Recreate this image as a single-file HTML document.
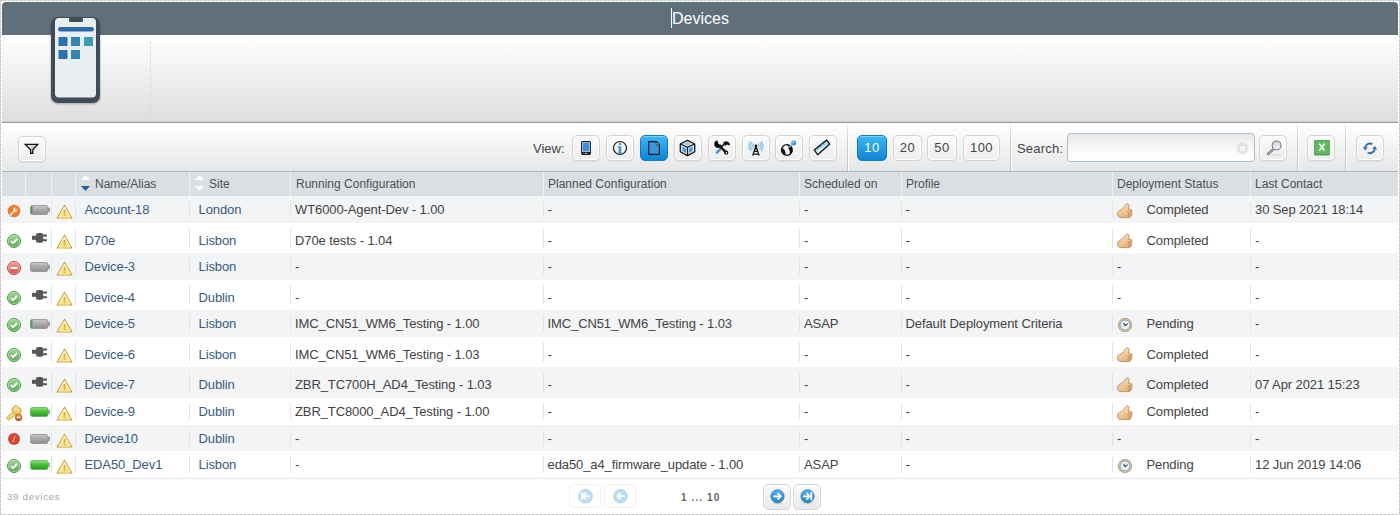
<!DOCTYPE html>
<html><head><meta charset="utf-8">
<style>
*{margin:0;padding:0;box-sizing:border-box}
html,body{width:1400px;height:515px;overflow:hidden;background:#fff;font-family:"Liberation Sans",sans-serif}
.abs{position:absolute}
.row svg,.abs>svg{display:block}
.fr{position:absolute}
#ft{left:0;top:0;width:1400px;height:1px;background:repeating-linear-gradient(90deg,#c4c4c4 0 2px,#dedede 2px 4px)}
#fb{left:0;top:514px;width:1400px;height:1px;background:repeating-linear-gradient(90deg,#c4c4c4 0 2px,#dedede 2px 4px)}
#fl{left:0;top:0;width:1px;height:515px;background:repeating-linear-gradient(180deg,#c4c4c4 0 2px,#dedede 2px 4px)}
#fr{left:1399px;top:0;width:1px;height:515px;background:repeating-linear-gradient(180deg,#c4c4c4 0 2px,#dedede 2px 4px)}
#hdr{position:absolute;left:2px;top:2px;width:1396px;height:33px;background:#5f707b;border-radius:4px 4px 0 0}
#title{position:absolute;left:672px;top:10px;color:#fff;font-size:16px;line-height:17px}
#caret{position:absolute;left:671px;top:8px;width:1px;height:20px;background:#fff}
#banner{position:absolute;left:2px;top:35px;width:1396px;height:87px;background:linear-gradient(#fff,#dedede)}
#bline{position:absolute;left:2px;top:121px;width:1396px;height:2px;background:linear-gradient(#cfcfcf 0 50%,#9a9a9a 50% 100%)}
#dots{position:absolute;left:150px;top:42px;width:0;height:74px;border-left:1px dotted #d2d2d2}
#toolbar{position:absolute;left:2px;top:123px;width:1396px;height:48px;background:linear-gradient(#fff 0%,#f6f6f6 40%,#e6e6e6 100%)}
#tline{position:absolute;left:2px;top:171px;width:1396px;height:1px;background:#b4b4b4}
.btn{position:absolute;width:28px;height:26px;border:1px solid #d3d3d3;border-radius:5px;background:linear-gradient(#fbfbfb,#ededed);box-shadow:inset 0 0 0 1px #fff,0 1px 1px rgba(0,0,0,0.06)}
.btn svg{position:absolute;left:0;top:0}
.btn.on{background:linear-gradient(#3cb8f4,#0e84d6);border-color:#1479bd;box-shadow:inset 0 1px 0 rgba(255,255,255,0.35)}
.sep{position:absolute;top:123px;width:1px;height:48px;background:linear-gradient(#f2f2f2,#d0d0d0 30%,#c4c4c4);box-shadow:1px 0 0 #fff}
.tt{position:absolute;font-size:13px;color:#444;line-height:13px}
.pg{position:absolute;top:135px;height:26px;border:1px solid #d3d3d3;border-radius:5px;background:linear-gradient(#fbfbfb,#ededed);box-shadow:inset 0 0 0 1px #fff;letter-spacing:0.4px;font-size:13px;color:#444;text-align:center;line-height:24px}
.pg.on{background:linear-gradient(#3cb8f4,#0e84d6);border-color:#1479bd;color:#fff;box-shadow:inset 0 1px 0 rgba(255,255,255,0.35)}
#search{position:absolute;left:1067px;top:133px;width:188px;height:29px;border:1px solid #a8bfd0;border-radius:4px;background:linear-gradient(#e9e9e9,#fafafa 60%,#fff)}
#thead{position:absolute;left:2px;top:172px;width:1396px;height:24px;background:#d9dfe3}
.th{position:absolute;top:172px;height:24px;font-size:12px;color:#505050;line-height:24px;white-space:nowrap}
.hs{position:absolute;top:172px;width:1px;height:24px;background:#eef1f3}
.row{position:absolute;left:2px;width:1396px}
.row.g{background:#f3f4f6}
.c{position:absolute;font-size:13px;color:#424242;white-space:nowrap;letter-spacing:-0.1px}
.lk{color:#375b80}
.vs{position:absolute;width:1px;background:#e3e6e9}
.pgb{position:absolute;top:484px;width:28px;height:26px;border:1px solid #d8d8d8;border-radius:5px;background:linear-gradient(#fafafa,#e9e9e9)}
.pgb.dis{width:32px;height:24px;border-color:#f0f0f0;background:#fff}
#botline{position:absolute;left:2px;top:478px;width:1396px;height:1px;background:#e8eaec}
</style></head><body>
<div id="ft" class="fr"></div><div id="fb" class="fr"></div><div id="fl" class="fr"></div><div id="fr" class="fr"></div>
<div id="hdr"></div>
<div id="title">Devices</div>
<div id="caret"></div>
<div id="banner"></div>
<div id="dots"></div>
<div id="bline"></div>
<!-- phone icon -->
<svg class="abs" style="left:48px;top:14px" width="56" height="92" viewBox="0 0 56 92">
  <defs>
    <linearGradient id="sq" x1="0" y1="0" x2="1" y2="0"><stop offset="0" stop-color="#2a72b0"/><stop offset="1" stop-color="#3a9bb3"/></linearGradient>
    <filter id="sh" x="-20%" y="-10%" width="140%" height="130%"><feDropShadow dx="0" dy="1" stdDeviation="1" flood-opacity="0.3"/></filter>
  </defs>
  <rect x="3" y="3" width="49" height="86" rx="7" fill="#414d58" filter="url(#sh)"/>
  <rect x="7" y="4" width="41" height="79.5" rx="4" fill="#e9eef2"/>
  <rect x="21" y="3" width="14" height="5" rx="1.5" fill="#414d58"/>
  <rect x="10" y="13" width="36" height="4.5" rx="2.2" fill="#2c6aa8"/>
  <rect x="10.5" y="23" width="9" height="9" fill="#2b72b0"/>
  <rect x="23" y="23" width="9" height="9" fill="#3185b4"/>
  <rect x="36" y="23" width="9" height="9" fill="#3a9db3"/>
  <rect x="10.5" y="36" width="9" height="9" fill="#2b72b0"/>
  <rect x="23" y="36" width="9" height="9" fill="#3185b4"/>
</svg>

<div id="toolbar"></div>
<div id="tline"></div>
<!-- filter -->
<div class="btn" style="left:18px;top:136px"><svg width="28" height="26" viewBox="0 0 28 26" style="left:-1px;top:-1px">
  <defs><linearGradient id="gf" x1="0" y1="0" x2="1" y2="0"><stop offset="0" stop-color="#fdfdfd"/><stop offset="0.6" stop-color="#c9ced3"/><stop offset="1" stop-color="#eef0f2"/></linearGradient></defs>
  <path d="M7.3 8.4H19.7L14.8 13.7V17.3H12.6V13.7Z" fill="url(#gf)" stroke="#111" stroke-width="1.3" stroke-linejoin="miter"/></svg></div>
<div class="tt" style="left:533px;top:142px">View:</div>
<!-- tablet -->
<div class="btn" style="left:572px;top:135px"><svg width="28" height="26" viewBox="0 0 28 26" style="left:-1px;top:-1px">
  <rect x="9.1" y="6.1" width="9.8" height="13.8" rx="1.3" fill="#151515"/><rect x="10.1" y="7.1" width="7.8" height="9.8" fill="#cfe6f7"/><rect x="10.7" y="7.7" width="6.6" height="8.6" fill="#3b8fd6"/>
  <rect x="12.9" y="17.9" width="2.2" height="1" fill="#eee"/><rect x="10.9" y="18.1" width="0.9" height="0.7" fill="#999"/><rect x="16.2" y="18.1" width="0.9" height="0.7" fill="#999"/></svg></div>
<!-- info -->
<div class="btn" style="left:606px;top:135px"><svg width="28" height="26" viewBox="0 0 28 26" style="left:-1px;top:-1px">
  <circle cx="14" cy="13" r="6.5" fill="none" stroke="#1e1e1e" stroke-width="1.2"/><circle cx="14.1" cy="9.1" r="1.3" fill="#3f93d6"/>
  <path d="M11.7 11.2H15.3V17.4H16.4V18.7H11.5V17.4H12.7V12.4H11.7Z" fill="#3f93d6"/></svg></div>
<!-- page (active) -->
<div class="btn on" style="left:640px;top:135px"><svg width="28" height="26" viewBox="0 0 28 26" style="left:-1px;top:-1px">
  <path d="M8.7 6.7H16.4L19.4 9.7V19.3H8.7Z" fill="#3a96dc" stroke="#0c1d2c" stroke-width="1.2" stroke-linejoin="miter"/><path d="M16.2 6.9V9.9H19.2" fill="#cfe8f8" stroke="#0c1d2c" stroke-width="0.8"/></svg></div>
<!-- cube -->
<div class="btn" style="left:674px;top:135px"><svg width="28" height="26" viewBox="0 0 28 26" style="left:-1px;top:-1px">
  <path d="M13.5 5.4L20.7 9V16.8L13.5 20.6L6.3 16.8V9Z" fill="#e6f3fb" stroke="#111" stroke-width="1.3" stroke-linejoin="round"/>
  <path d="M6.5 9L13.5 12.4L20.5 9M13.5 12.4V20.4" fill="none" stroke="#111" stroke-width="1.3"/>
  <path d="M8.3 11.6L12 13.5V18L8.3 16.1Z M18.7 11.6L15 13.5V18L18.7 16.1Z" fill="#4d9ad8"/><path d="M10 8.8L13.5 7.2L17 8.8L13.5 10.5Z" fill="#8cc1e8"/></svg></div>
<!-- tools -->
<div class="btn" style="left:708px;top:135px"><svg width="28" height="26" viewBox="0 0 28 26" style="left:-1px;top:-1px">
  <path d="M12 14.3L8.9 17.6" stroke="#4a9ad8" stroke-width="2.7" stroke-linecap="round"/>
  <path d="M12.3 12.9L16.6 8.7" stroke="#111" stroke-width="1.5"/>
  <path d="M15 8L17.2 6.2L20.2 6.8L22.1 9.3L21.2 10.6L19.3 9.6L17.5 11Z" fill="#111"/>
  <path d="M11.4 10.6L18.2 17.6" stroke="#111" stroke-width="2.3"/>
  <path d="M9.6 5.6A3.7 3.7 0 1 0 13.6 9.8L11.4 9.6L10.1 8.3Z" fill="#111"/>
  <circle cx="18.2" cy="17.7" r="2.1" fill="#111"/><circle cx="18.4" cy="17.9" r="0.8" fill="#fff"/></svg></div>
<!-- antenna -->
<div class="btn" style="left:742px;top:135px"><svg width="28" height="26" viewBox="0 0 28 26" style="left:-1px;top:-1px">
  <path d="M11.9 8.6C10.5 10 10.5 12.2 11.9 13.6M15.9 8.6C17.3 10 17.3 12.2 15.9 13.6M10.3 7.2C8.3 9.3 8.3 12.9 10.3 15M17.5 7.2C19.5 9.3 19.5 12.9 17.5 15M8.8 5.9C6.2 8.7 6.2 13.5 8.8 16.2M19 5.9C21.6 8.7 21.6 13.5 19 16.2" fill="none" stroke="#3c9ad8" stroke-width="0.8"/>
  <circle cx="13.9" cy="10.7" r="1.3" fill="#111"/>
  <path d="M13.9 11.2L10.6 20.6M13.9 11.2L17.2 20.6M12.1 16.4H15.7M11.3 19.1H16.5M12.8 14H15" fill="none" stroke="#111" stroke-width="1.2"/></svg></div>
<!-- globe -->
<div class="btn" style="left:775px;top:135px"><svg width="28" height="26" viewBox="0 0 28 26" style="left:-1px;top:-1px">
  <circle cx="11.9" cy="15" r="5.4" fill="#f2f2f2" stroke="#111" stroke-width="1.3"/>
  <path d="M6.8 13.2C8.6 13.4 9.6 14.6 10 16L10.9 19.8C8.6 19.5 6.7 17.4 6.5 15Z" fill="#111"/>
  <path d="M11.5 9.8C13.2 10.4 13.7 11.6 13.3 12.8C13 14 14.4 14.6 14.8 16L14.7 19.2C16.7 18 17.6 16.2 17.2 13.8L15.6 10.8Z" fill="#111"/>
  <path d="M13 12.8L17.6 9" stroke="#a8bfd0" stroke-width="1.1"/>
  <circle cx="18.7" cy="8" r="2.5" fill="#3f98d8"/><circle cx="18.1" cy="7.4" r="0.8" fill="#d6ecfa"/></svg></div>
<!-- ruler -->
<div class="btn" style="left:809px;top:135px"><svg width="28" height="26" viewBox="0 0 28 26" style="left:-1px;top:-1px">
  <defs><linearGradient id="gr" x1="0.3" y1="0.2" x2="0.6" y2="0.8"><stop offset="0" stop-color="#8ccbee"/><stop offset="1" stop-color="#f4fafd"/></linearGradient></defs>
  <path d="M5.3 15L17.6 5L20.8 9.1L8.6 19.7Z" fill="url(#gr)" stroke="#111" stroke-width="1.3" stroke-linejoin="round"/>
  <path d="M7.9 13.4L8.9 14.6M9.4 12.2L10 12.9M10.9 10.9L11.9 12.1M12.5 9.6L13.1 10.4M14.1 8.4L15.1 9.6M15.6 7.1L16.2 7.9" stroke="#1f5f8f" stroke-width="1"/></svg></div>
<div class="sep" style="left:847px"></div>
<div class="pg on" style="left:857px;width:30px">10</div>
<div class="pg" style="left:893px;width:29px">20</div>
<div class="pg" style="left:927px;width:30px">50</div>
<div class="pg" style="left:963px;width:37px">100</div>
<div class="sep" style="left:1010px"></div>
<div class="tt" style="left:1017px;top:142px;letter-spacing:0.2px">Search:</div>
<div id="search"><svg class="abs" style="left:168px;top:8px" width="13" height="13" viewBox="0 0 13 13"><circle cx="6.5" cy="6.5" r="5.8" fill="#e2e2e2"/><path d="M4.2 4.2l4.6 4.6M8.8 4.2l-4.6 4.6" stroke="#fff" stroke-width="1.5"/></svg></div>
<!-- search btn -->
<div class="btn" style="left:1259px;top:135px"><svg width="28" height="26" viewBox="0 0 28 26" style="left:-1px;top:-1px">
  <defs><linearGradient id="gs" x1="0" y1="0" x2="0" y2="1"><stop offset="0" stop-color="#c8d4e8"/><stop offset="1" stop-color="#f4f7fb"/></linearGradient></defs>
  <ellipse cx="16" cy="20" rx="6" ry="1" fill="#000" opacity="0.07"/>
  <path d="M13.6 14.8L9.2 18.9" stroke="#6a6a6a" stroke-width="2.4" stroke-linecap="round"/><path d="M13.4 15L9.4 18.7" stroke="#e8e8e8" stroke-width="0.8" stroke-linecap="round"/>
  <circle cx="17.6" cy="10.4" r="4.4" fill="url(#gs)" stroke="#7b7b7b" stroke-width="1.1"/></svg></div>
<div class="sep" style="left:1297px"></div>
<!-- excel -->
<div class="btn" style="left:1307px;top:135px"><svg width="28" height="26" viewBox="0 0 28 26" style="left:-1px;top:-1px">
  <rect x="7.1" y="5" width="15.7" height="15.4" rx="1" fill="#4c9e4c"/><rect x="7.6" y="5.4" width="14.7" height="13.8" rx="0.8" fill="#62b562"/>
  <path d="M12.3 8.6L17.6 15.8M17.6 8.6L12.3 15.8" stroke="#e8f8e8" stroke-width="1.7"/></svg></div>
<div class="sep" style="left:1345px"></div>
<!-- refresh -->
<div class="btn" style="left:1356px;top:135px"><svg width="28" height="26" viewBox="0 0 28 26" style="left:-1px;top:-1px">
  <path d="M16.4 9.1A4.8 4.8 0 0 0 9.3 12.3" fill="none" stroke="#2f6ea8" stroke-width="1.9"/><path d="M6.8 12.1L11.8 12.5L9 15.6Z" fill="#2f6ea8"/>
  <path d="M11.6 17.5A4.8 4.8 0 0 0 18.7 14.3" fill="none" stroke="#2f6ea8" stroke-width="1.9"/><path d="M21.2 14.5L16.2 14.1L19 11Z" fill="#2f6ea8"/></svg></div>

<!-- table header -->
<div id="thead"></div>
<div class="hs" style="left:25px"></div>
<div class="hs" style="left:51px"></div>
<div class="hs" style="left:75px"></div>
<div class="hs" style="left:189px"></div>
<div class="hs" style="left:290px"></div>
<div class="hs" style="left:543px"></div>
<div class="hs" style="left:799px"></div>
<div class="hs" style="left:901px"></div>
<div class="hs" style="left:1112px"></div>
<div class="hs" style="left:1250px"></div>
<svg class="abs" style="left:79.5px;top:174px" width="11" height="18" viewBox="0 0 11 18"><path d="M1 6L5.5 1L10 6z" fill="#fff"/><path d="M1 12L5.5 17L10 12z" fill="#23619d"/></svg>
<svg class="abs" style="left:194px;top:174px" width="11" height="18" viewBox="0 0 11 18"><path d="M1 6L5.5 1L10 6z" fill="#fff"/><path d="M1 12L5.5 17L10 12z" fill="#fff"/></svg>
<div class="th" style="left:95px">Name/Alias</div>
<div class="th" style="left:209px">Site</div>
<div class="th" style="left:296px">Running Configuration</div>
<div class="th" style="left:548px">Planned Configuration</div>
<div class="th" style="left:804px">Scheduled on</div>
<div class="th" style="left:906px">Profile</div>
<div class="th" style="left:1117px">Deployment Status</div>
<div class="th" style="left:1255px">Last Contact</div>

<div id="rows"><div class="row g" style="top:196px;height:27px">
<div class="vs" style="left:49px;top:5px;height:17px"></div>
<div class="vs" style="left:73px;top:5px;height:17px"></div>
<div class="vs" style="left:187px;top:5px;height:17px"></div>
<div class="vs" style="left:288px;top:5px;height:17px"></div>
<div class="vs" style="left:541px;top:5px;height:17px"></div>
<div class="vs" style="left:797px;top:5px;height:17px"></div>
<div class="vs" style="left:899px;top:5px;height:17px"></div>
<div class="vs" style="left:1110px;top:5px;height:17px"></div>
<div class="vs" style="left:1248px;top:5px;height:17px"></div>
<div class="abs" style="left:5px;top:8px"><svg width="14" height="14" viewBox="0 0 14 14"><circle cx="7" cy="7" r="6.3" fill="#ea7b2f"/><path d="M3.2 11.2l4.3-4.3" stroke="#fbe1cc" stroke-width="1.8" stroke-linecap="round"/><circle cx="8.3" cy="5.7" r="2.2" fill="#fbe1cc"/><circle cx="9" cy="5" r="0.9" fill="#ea7b2f"/></svg></div>
<div class="abs" style="left:27.5px;top:8.5px"><svg width="20" height="11" viewBox="0 0 20 11"><defs><linearGradient id="bgr" x1="0" y1="0" x2="0" y2="1"><stop offset="0" stop-color="#c9c9c9"/><stop offset="0.5" stop-color="#a8a8a8"/><stop offset="1" stop-color="#8f8f8f"/></linearGradient></defs><rect x="0.5" y="0.5" width="17.5" height="9" rx="2" fill="url(#bgr)" stroke="#8e8e8e" stroke-width="0.8"/><rect x="0.7" y="0.8" width="1.8" height="8.4" rx="0.9" fill="#4aa24a"/><rect x="18" y="2.8" width="2" height="4" fill="#999"/></svg></div>
<div class="abs" style="left:53.5px;top:7.5px"><svg width="17" height="16" viewBox="0 0 17 16"><defs><linearGradient id="gw" x1="0" y1="0" x2="0" y2="1"><stop offset="0" stop-color="#fffbd0"/><stop offset="1" stop-color="#f6dc6a"/></linearGradient></defs><path d="M8.5 1.2L15.9 14H1.1Z" fill="url(#gw)" stroke="#cf9f3e" stroke-width="1.1" stroke-linejoin="round"/><path d="M8.5 2.9L14.2 13H2.8Z" fill="none" stroke="#fffbe6" stroke-width="0.6"/><path d="M8.5 6v3.8" stroke="#d2ac38" stroke-width="1.7"/><rect x="7.7" y="10.6" width="1.6" height="1.5" fill="#d2ac38"/></svg></div>
<div class="c lk" style="left:82.5px;top:6px;line-height:15px">Account-18</div>
<div class="c lk" style="left:196.5px;top:6px;line-height:15px">London</div>
<div class="c" style="left:293px;top:6px;line-height:15px">WT6000-Agent-Dev - 1.00</div>
<div class="c" style="left:545.5px;top:6px;line-height:15px">-</div>
<div class="c" style="left:802px;top:6px;line-height:15px">-</div>
<div class="c" style="left:903.5px;top:6px;line-height:15px">-</div>
<div class="abs" style="left:1114.5px;top:6.5px"><svg width="16" height="16" viewBox="0 0 16 16"><defs><linearGradient id="gt" x1="0" y1="0" x2="0.4" y2="1"><stop offset="0" stop-color="#fbe6c6"/><stop offset="1" stop-color="#e8b47a"/></linearGradient></defs><path d="M2.5 7.5C4 6.5 5.5 6 6.5 4.5L9 1.5C10 0.5 12 0.8 12 2.5L11.5 6.2L14 6.5C15.3 6.8 15.3 8.2 14.6 8.8C15.2 9.3 15.1 10.6 14.3 11C14.8 11.6 14.5 12.8 13.6 13C13.8 13.8 13.2 14.6 12.2 14.6L3.5 14.6C1.5 14.6 0.5 12.5 0.5 10.5C0.5 9 1.2 8.2 2.5 7.5Z" fill="url(#gt)" stroke="#b4844e" stroke-width="0.8"/><path d="M10.6 8.8H14.4M10.6 11H14.1M10.6 13H13.4" stroke="#b47d48" stroke-width="0.8"/></svg></div>
<div class="c" style="left:1144.5px;top:6px;line-height:15px">Completed</div>
<div class="c" style="left:1253px;top:6px;line-height:15px">30 Sep 2021 18:14</div>
</div>
<div class="row" style="top:223px;height:30px">
<div class="vs" style="left:49px;top:5px;height:20px"></div>
<div class="vs" style="left:73px;top:5px;height:20px"></div>
<div class="vs" style="left:187px;top:5px;height:20px"></div>
<div class="vs" style="left:288px;top:5px;height:20px"></div>
<div class="vs" style="left:541px;top:5px;height:20px"></div>
<div class="vs" style="left:797px;top:5px;height:20px"></div>
<div class="vs" style="left:899px;top:5px;height:20px"></div>
<div class="vs" style="left:1110px;top:5px;height:20px"></div>
<div class="vs" style="left:1248px;top:5px;height:20px"></div>
<div class="abs" style="left:4px;top:10px"><svg width="16" height="16" viewBox="0 0 16 16"><defs><linearGradient id="gc" x1="0" y1="0" x2="0" y2="1"><stop offset="0" stop-color="#a3d99a"/><stop offset="1" stop-color="#4fa54a"/></linearGradient></defs><circle cx="8" cy="8" r="6.5" fill="url(#gc)" stroke="#4d9a49" stroke-width="1"/><circle cx="8" cy="8" r="5.6" fill="none" stroke="#d8f0d4" stroke-width="0.6" opacity="0.8"/><path d="M4.9 8.1l2.1 2l4.1-4.1" fill="none" stroke="#fff" stroke-width="1.9"/></svg></div>
<div class="abs" style="left:30px;top:10px"><svg width="16" height="11" viewBox="0 0 16 11"><rect x="0" y="2.8" width="5" height="4" fill="#575757"/><rect x="4" y="0" width="7.2" height="9.8" rx="2" fill="#575757"/><rect x="10.8" y="1.5" width="4.2" height="2" fill="#575757"/><rect x="10.8" y="6.2" width="4.2" height="2" fill="#575757"/></svg></div>
<div class="abs" style="left:53.5px;top:10.5px"><svg width="17" height="16" viewBox="0 0 17 16"><defs><linearGradient id="gw" x1="0" y1="0" x2="0" y2="1"><stop offset="0" stop-color="#fffbd0"/><stop offset="1" stop-color="#f6dc6a"/></linearGradient></defs><path d="M8.5 1.2L15.9 14H1.1Z" fill="url(#gw)" stroke="#cf9f3e" stroke-width="1.1" stroke-linejoin="round"/><path d="M8.5 2.9L14.2 13H2.8Z" fill="none" stroke="#fffbe6" stroke-width="0.6"/><path d="M8.5 6v3.8" stroke="#d2ac38" stroke-width="1.7"/><rect x="7.7" y="10.6" width="1.6" height="1.5" fill="#d2ac38"/></svg></div>
<div class="c lk" style="left:82.5px;top:9.5px;line-height:15px">D70e</div>
<div class="c lk" style="left:196.5px;top:9.5px;line-height:15px">Lisbon</div>
<div class="c" style="left:293px;top:9.5px;line-height:15px">D70e tests - 1.04</div>
<div class="c" style="left:545.5px;top:9.5px;line-height:15px">-</div>
<div class="c" style="left:802px;top:9.5px;line-height:15px">-</div>
<div class="c" style="left:903.5px;top:9.5px;line-height:15px">-</div>
<div class="abs" style="left:1114.5px;top:9.5px"><svg width="16" height="16" viewBox="0 0 16 16"><defs><linearGradient id="gt" x1="0" y1="0" x2="0.4" y2="1"><stop offset="0" stop-color="#fbe6c6"/><stop offset="1" stop-color="#e8b47a"/></linearGradient></defs><path d="M2.5 7.5C4 6.5 5.5 6 6.5 4.5L9 1.5C10 0.5 12 0.8 12 2.5L11.5 6.2L14 6.5C15.3 6.8 15.3 8.2 14.6 8.8C15.2 9.3 15.1 10.6 14.3 11C14.8 11.6 14.5 12.8 13.6 13C13.8 13.8 13.2 14.6 12.2 14.6L3.5 14.6C1.5 14.6 0.5 12.5 0.5 10.5C0.5 9 1.2 8.2 2.5 7.5Z" fill="url(#gt)" stroke="#b4844e" stroke-width="0.8"/><path d="M10.6 8.8H14.4M10.6 11H14.1M10.6 13H13.4" stroke="#b47d48" stroke-width="0.8"/></svg></div>
<div class="c" style="left:1144.5px;top:9.5px;line-height:15px">Completed</div>
<div class="c" style="left:1253px;top:9.5px;line-height:15px">-</div>
</div>
<div class="row g" style="top:253px;height:27px">
<div class="vs" style="left:49px;top:5px;height:17px"></div>
<div class="vs" style="left:73px;top:5px;height:17px"></div>
<div class="vs" style="left:187px;top:5px;height:17px"></div>
<div class="vs" style="left:288px;top:5px;height:17px"></div>
<div class="vs" style="left:541px;top:5px;height:17px"></div>
<div class="vs" style="left:797px;top:5px;height:17px"></div>
<div class="vs" style="left:899px;top:5px;height:17px"></div>
<div class="vs" style="left:1110px;top:5px;height:17px"></div>
<div class="vs" style="left:1248px;top:5px;height:17px"></div>
<div class="abs" style="left:4px;top:7px"><svg width="16" height="16" viewBox="0 0 16 16"><defs><linearGradient id="gm" x1="0" y1="0" x2="0" y2="1"><stop offset="0" stop-color="#f4a49c"/><stop offset="1" stop-color="#d44a40"/></linearGradient></defs><circle cx="8" cy="8" r="6.5" fill="url(#gm)" stroke="#c4463c" stroke-width="1"/><circle cx="8" cy="8" r="5.6" fill="none" stroke="#fde0dc" stroke-width="0.6" opacity="0.7"/><rect x="4.4" y="7" width="7.2" height="2" fill="#fff"/></svg></div>
<div class="abs" style="left:27.5px;top:8.5px"><svg width="20" height="11" viewBox="0 0 20 11"><defs><linearGradient id="bgr" x1="0" y1="0" x2="0" y2="1"><stop offset="0" stop-color="#c9c9c9"/><stop offset="0.5" stop-color="#a8a8a8"/><stop offset="1" stop-color="#8f8f8f"/></linearGradient></defs><rect x="0.5" y="0.5" width="17.5" height="9" rx="2" fill="url(#bgr)" stroke="#8e8e8e" stroke-width="0.8"/><rect x="18" y="2.8" width="2" height="4" fill="#999"/></svg></div>
<div class="abs" style="left:53.5px;top:7.5px"><svg width="17" height="16" viewBox="0 0 17 16"><defs><linearGradient id="gw" x1="0" y1="0" x2="0" y2="1"><stop offset="0" stop-color="#fffbd0"/><stop offset="1" stop-color="#f6dc6a"/></linearGradient></defs><path d="M8.5 1.2L15.9 14H1.1Z" fill="url(#gw)" stroke="#cf9f3e" stroke-width="1.1" stroke-linejoin="round"/><path d="M8.5 2.9L14.2 13H2.8Z" fill="none" stroke="#fffbe6" stroke-width="0.6"/><path d="M8.5 6v3.8" stroke="#d2ac38" stroke-width="1.7"/><rect x="7.7" y="10.6" width="1.6" height="1.5" fill="#d2ac38"/></svg></div>
<div class="c lk" style="left:82.5px;top:6px;line-height:15px">Device-3</div>
<div class="c lk" style="left:196.5px;top:6px;line-height:15px">Lisbon</div>
<div class="c" style="left:293px;top:6px;line-height:15px">-</div>
<div class="c" style="left:545.5px;top:6px;line-height:15px">-</div>
<div class="c" style="left:802px;top:6px;line-height:15px">-</div>
<div class="c" style="left:903.5px;top:6px;line-height:15px">-</div>
<div class="c" style="left:1115px;top:6px;line-height:15px">-</div>
<div class="c" style="left:1253px;top:6px;line-height:15px">-</div>
</div>
<div class="row" style="top:280px;height:30px">
<div class="vs" style="left:49px;top:5px;height:20px"></div>
<div class="vs" style="left:73px;top:5px;height:20px"></div>
<div class="vs" style="left:187px;top:5px;height:20px"></div>
<div class="vs" style="left:288px;top:5px;height:20px"></div>
<div class="vs" style="left:541px;top:5px;height:20px"></div>
<div class="vs" style="left:797px;top:5px;height:20px"></div>
<div class="vs" style="left:899px;top:5px;height:20px"></div>
<div class="vs" style="left:1110px;top:5px;height:20px"></div>
<div class="vs" style="left:1248px;top:5px;height:20px"></div>
<div class="abs" style="left:4px;top:10px"><svg width="16" height="16" viewBox="0 0 16 16"><defs><linearGradient id="gc" x1="0" y1="0" x2="0" y2="1"><stop offset="0" stop-color="#a3d99a"/><stop offset="1" stop-color="#4fa54a"/></linearGradient></defs><circle cx="8" cy="8" r="6.5" fill="url(#gc)" stroke="#4d9a49" stroke-width="1"/><circle cx="8" cy="8" r="5.6" fill="none" stroke="#d8f0d4" stroke-width="0.6" opacity="0.8"/><path d="M4.9 8.1l2.1 2l4.1-4.1" fill="none" stroke="#fff" stroke-width="1.9"/></svg></div>
<div class="abs" style="left:30px;top:10px"><svg width="16" height="11" viewBox="0 0 16 11"><rect x="0" y="2.8" width="5" height="4" fill="#575757"/><rect x="4" y="0" width="7.2" height="9.8" rx="2" fill="#575757"/><rect x="10.8" y="1.5" width="4.2" height="2" fill="#575757"/><rect x="10.8" y="6.2" width="4.2" height="2" fill="#575757"/></svg></div>
<div class="abs" style="left:53.5px;top:10.5px"><svg width="17" height="16" viewBox="0 0 17 16"><defs><linearGradient id="gw" x1="0" y1="0" x2="0" y2="1"><stop offset="0" stop-color="#fffbd0"/><stop offset="1" stop-color="#f6dc6a"/></linearGradient></defs><path d="M8.5 1.2L15.9 14H1.1Z" fill="url(#gw)" stroke="#cf9f3e" stroke-width="1.1" stroke-linejoin="round"/><path d="M8.5 2.9L14.2 13H2.8Z" fill="none" stroke="#fffbe6" stroke-width="0.6"/><path d="M8.5 6v3.8" stroke="#d2ac38" stroke-width="1.7"/><rect x="7.7" y="10.6" width="1.6" height="1.5" fill="#d2ac38"/></svg></div>
<div class="c lk" style="left:82.5px;top:9.5px;line-height:15px">Device-4</div>
<div class="c lk" style="left:196.5px;top:9.5px;line-height:15px">Dublin</div>
<div class="c" style="left:293px;top:9.5px;line-height:15px">-</div>
<div class="c" style="left:545.5px;top:9.5px;line-height:15px">-</div>
<div class="c" style="left:802px;top:9.5px;line-height:15px">-</div>
<div class="c" style="left:903.5px;top:9.5px;line-height:15px">-</div>
<div class="c" style="left:1115px;top:9.5px;line-height:15px">-</div>
<div class="c" style="left:1253px;top:9.5px;line-height:15px">-</div>
</div>
<div class="row g" style="top:310px;height:27px">
<div class="vs" style="left:49px;top:5px;height:17px"></div>
<div class="vs" style="left:73px;top:5px;height:17px"></div>
<div class="vs" style="left:187px;top:5px;height:17px"></div>
<div class="vs" style="left:288px;top:5px;height:17px"></div>
<div class="vs" style="left:541px;top:5px;height:17px"></div>
<div class="vs" style="left:797px;top:5px;height:17px"></div>
<div class="vs" style="left:899px;top:5px;height:17px"></div>
<div class="vs" style="left:1110px;top:5px;height:17px"></div>
<div class="vs" style="left:1248px;top:5px;height:17px"></div>
<div class="abs" style="left:4px;top:7px"><svg width="16" height="16" viewBox="0 0 16 16"><defs><linearGradient id="gc" x1="0" y1="0" x2="0" y2="1"><stop offset="0" stop-color="#a3d99a"/><stop offset="1" stop-color="#4fa54a"/></linearGradient></defs><circle cx="8" cy="8" r="6.5" fill="url(#gc)" stroke="#4d9a49" stroke-width="1"/><circle cx="8" cy="8" r="5.6" fill="none" stroke="#d8f0d4" stroke-width="0.6" opacity="0.8"/><path d="M4.9 8.1l2.1 2l4.1-4.1" fill="none" stroke="#fff" stroke-width="1.9"/></svg></div>
<div class="abs" style="left:27.5px;top:8.5px"><svg width="20" height="11" viewBox="0 0 20 11"><defs><linearGradient id="bgr" x1="0" y1="0" x2="0" y2="1"><stop offset="0" stop-color="#c9c9c9"/><stop offset="0.5" stop-color="#a8a8a8"/><stop offset="1" stop-color="#8f8f8f"/></linearGradient></defs><rect x="0.5" y="0.5" width="17.5" height="9" rx="2" fill="url(#bgr)" stroke="#8e8e8e" stroke-width="0.8"/><rect x="0.7" y="0.8" width="1.8" height="8.4" rx="0.9" fill="#4aa24a"/><rect x="18" y="2.8" width="2" height="4" fill="#999"/></svg></div>
<div class="abs" style="left:53.5px;top:7.5px"><svg width="17" height="16" viewBox="0 0 17 16"><defs><linearGradient id="gw" x1="0" y1="0" x2="0" y2="1"><stop offset="0" stop-color="#fffbd0"/><stop offset="1" stop-color="#f6dc6a"/></linearGradient></defs><path d="M8.5 1.2L15.9 14H1.1Z" fill="url(#gw)" stroke="#cf9f3e" stroke-width="1.1" stroke-linejoin="round"/><path d="M8.5 2.9L14.2 13H2.8Z" fill="none" stroke="#fffbe6" stroke-width="0.6"/><path d="M8.5 6v3.8" stroke="#d2ac38" stroke-width="1.7"/><rect x="7.7" y="10.6" width="1.6" height="1.5" fill="#d2ac38"/></svg></div>
<div class="c lk" style="left:82.5px;top:6px;line-height:15px">Device-5</div>
<div class="c lk" style="left:196.5px;top:6px;line-height:15px">Lisbon</div>
<div class="c" style="left:293px;top:6px;line-height:15px">IMC_CN51_WM6_Testing - 1.00</div>
<div class="c" style="left:545.5px;top:6px;line-height:15px">IMC_CN51_WM6_Testing - 1.03</div>
<div class="c" style="left:802px;top:6px;line-height:15px">ASAP</div>
<div class="c" style="left:903.5px;top:6px;line-height:15px">Default Deployment Criteria</div>
<div class="abs" style="left:1115px;top:7px"><svg width="16" height="16" viewBox="0 0 16 16"><circle cx="8" cy="8" r="6.5" fill="#f3efe6" stroke="#b89c6c" stroke-width="1.1"/><circle cx="8" cy="8" r="5.1" fill="#e4f2f8" stroke="#6f8a95" stroke-width="0.9"/><path d="M8 8.8L6.6 6M8 8.8L10.6 6.6" fill="none" stroke="#3e4a50" stroke-width="1.2"/></svg></div>
<div class="c" style="left:1144.5px;top:6px;line-height:15px">Pending</div>
<div class="c" style="left:1253px;top:6px;line-height:15px">-</div>
</div>
<div class="row" style="top:337px;height:30px">
<div class="vs" style="left:49px;top:5px;height:20px"></div>
<div class="vs" style="left:73px;top:5px;height:20px"></div>
<div class="vs" style="left:187px;top:5px;height:20px"></div>
<div class="vs" style="left:288px;top:5px;height:20px"></div>
<div class="vs" style="left:541px;top:5px;height:20px"></div>
<div class="vs" style="left:797px;top:5px;height:20px"></div>
<div class="vs" style="left:899px;top:5px;height:20px"></div>
<div class="vs" style="left:1110px;top:5px;height:20px"></div>
<div class="vs" style="left:1248px;top:5px;height:20px"></div>
<div class="abs" style="left:4px;top:10px"><svg width="16" height="16" viewBox="0 0 16 16"><defs><linearGradient id="gc" x1="0" y1="0" x2="0" y2="1"><stop offset="0" stop-color="#a3d99a"/><stop offset="1" stop-color="#4fa54a"/></linearGradient></defs><circle cx="8" cy="8" r="6.5" fill="url(#gc)" stroke="#4d9a49" stroke-width="1"/><circle cx="8" cy="8" r="5.6" fill="none" stroke="#d8f0d4" stroke-width="0.6" opacity="0.8"/><path d="M4.9 8.1l2.1 2l4.1-4.1" fill="none" stroke="#fff" stroke-width="1.9"/></svg></div>
<div class="abs" style="left:30px;top:10px"><svg width="16" height="11" viewBox="0 0 16 11"><rect x="0" y="2.8" width="5" height="4" fill="#575757"/><rect x="4" y="0" width="7.2" height="9.8" rx="2" fill="#575757"/><rect x="10.8" y="1.5" width="4.2" height="2" fill="#575757"/><rect x="10.8" y="6.2" width="4.2" height="2" fill="#575757"/></svg></div>
<div class="abs" style="left:53.5px;top:10.5px"><svg width="17" height="16" viewBox="0 0 17 16"><defs><linearGradient id="gw" x1="0" y1="0" x2="0" y2="1"><stop offset="0" stop-color="#fffbd0"/><stop offset="1" stop-color="#f6dc6a"/></linearGradient></defs><path d="M8.5 1.2L15.9 14H1.1Z" fill="url(#gw)" stroke="#cf9f3e" stroke-width="1.1" stroke-linejoin="round"/><path d="M8.5 2.9L14.2 13H2.8Z" fill="none" stroke="#fffbe6" stroke-width="0.6"/><path d="M8.5 6v3.8" stroke="#d2ac38" stroke-width="1.7"/><rect x="7.7" y="10.6" width="1.6" height="1.5" fill="#d2ac38"/></svg></div>
<div class="c lk" style="left:82.5px;top:9.5px;line-height:15px">Device-6</div>
<div class="c lk" style="left:196.5px;top:9.5px;line-height:15px">Lisbon</div>
<div class="c" style="left:293px;top:9.5px;line-height:15px">IMC_CN51_WM6_Testing - 1.03</div>
<div class="c" style="left:545.5px;top:9.5px;line-height:15px">-</div>
<div class="c" style="left:802px;top:9.5px;line-height:15px">-</div>
<div class="c" style="left:903.5px;top:9.5px;line-height:15px">-</div>
<div class="abs" style="left:1114.5px;top:9.5px"><svg width="16" height="16" viewBox="0 0 16 16"><defs><linearGradient id="gt" x1="0" y1="0" x2="0.4" y2="1"><stop offset="0" stop-color="#fbe6c6"/><stop offset="1" stop-color="#e8b47a"/></linearGradient></defs><path d="M2.5 7.5C4 6.5 5.5 6 6.5 4.5L9 1.5C10 0.5 12 0.8 12 2.5L11.5 6.2L14 6.5C15.3 6.8 15.3 8.2 14.6 8.8C15.2 9.3 15.1 10.6 14.3 11C14.8 11.6 14.5 12.8 13.6 13C13.8 13.8 13.2 14.6 12.2 14.6L3.5 14.6C1.5 14.6 0.5 12.5 0.5 10.5C0.5 9 1.2 8.2 2.5 7.5Z" fill="url(#gt)" stroke="#b4844e" stroke-width="0.8"/><path d="M10.6 8.8H14.4M10.6 11H14.1M10.6 13H13.4" stroke="#b47d48" stroke-width="0.8"/></svg></div>
<div class="c" style="left:1144.5px;top:9.5px;line-height:15px">Completed</div>
<div class="c" style="left:1253px;top:9.5px;line-height:15px">-</div>
</div>
<div class="row g" style="top:367px;height:31px">
<div class="vs" style="left:49px;top:5px;height:21px"></div>
<div class="vs" style="left:73px;top:5px;height:21px"></div>
<div class="vs" style="left:187px;top:5px;height:21px"></div>
<div class="vs" style="left:288px;top:5px;height:21px"></div>
<div class="vs" style="left:541px;top:5px;height:21px"></div>
<div class="vs" style="left:797px;top:5px;height:21px"></div>
<div class="vs" style="left:899px;top:5px;height:21px"></div>
<div class="vs" style="left:1110px;top:5px;height:21px"></div>
<div class="vs" style="left:1248px;top:5px;height:21px"></div>
<div class="abs" style="left:4px;top:10px"><svg width="16" height="16" viewBox="0 0 16 16"><defs><linearGradient id="gc" x1="0" y1="0" x2="0" y2="1"><stop offset="0" stop-color="#a3d99a"/><stop offset="1" stop-color="#4fa54a"/></linearGradient></defs><circle cx="8" cy="8" r="6.5" fill="url(#gc)" stroke="#4d9a49" stroke-width="1"/><circle cx="8" cy="8" r="5.6" fill="none" stroke="#d8f0d4" stroke-width="0.6" opacity="0.8"/><path d="M4.9 8.1l2.1 2l4.1-4.1" fill="none" stroke="#fff" stroke-width="1.9"/></svg></div>
<div class="abs" style="left:30px;top:10px"><svg width="16" height="11" viewBox="0 0 16 11"><rect x="0" y="2.8" width="5" height="4" fill="#575757"/><rect x="4" y="0" width="7.2" height="9.8" rx="2" fill="#575757"/><rect x="10.8" y="1.5" width="4.2" height="2" fill="#575757"/><rect x="10.8" y="6.2" width="4.2" height="2" fill="#575757"/></svg></div>
<div class="abs" style="left:53.5px;top:10.5px"><svg width="17" height="16" viewBox="0 0 17 16"><defs><linearGradient id="gw" x1="0" y1="0" x2="0" y2="1"><stop offset="0" stop-color="#fffbd0"/><stop offset="1" stop-color="#f6dc6a"/></linearGradient></defs><path d="M8.5 1.2L15.9 14H1.1Z" fill="url(#gw)" stroke="#cf9f3e" stroke-width="1.1" stroke-linejoin="round"/><path d="M8.5 2.9L14.2 13H2.8Z" fill="none" stroke="#fffbe6" stroke-width="0.6"/><path d="M8.5 6v3.8" stroke="#d2ac38" stroke-width="1.7"/><rect x="7.7" y="10.6" width="1.6" height="1.5" fill="#d2ac38"/></svg></div>
<div class="c lk" style="left:82.5px;top:9.5px;line-height:15px">Device-7</div>
<div class="c lk" style="left:196.5px;top:9.5px;line-height:15px">Dublin</div>
<div class="c" style="left:293px;top:9.5px;line-height:15px">ZBR_TC700H_AD4_Testing - 1.03</div>
<div class="c" style="left:545.5px;top:9.5px;line-height:15px">-</div>
<div class="c" style="left:802px;top:9.5px;line-height:15px">-</div>
<div class="c" style="left:903.5px;top:9.5px;line-height:15px">-</div>
<div class="abs" style="left:1114.5px;top:9.5px"><svg width="16" height="16" viewBox="0 0 16 16"><defs><linearGradient id="gt" x1="0" y1="0" x2="0.4" y2="1"><stop offset="0" stop-color="#fbe6c6"/><stop offset="1" stop-color="#e8b47a"/></linearGradient></defs><path d="M2.5 7.5C4 6.5 5.5 6 6.5 4.5L9 1.5C10 0.5 12 0.8 12 2.5L11.5 6.2L14 6.5C15.3 6.8 15.3 8.2 14.6 8.8C15.2 9.3 15.1 10.6 14.3 11C14.8 11.6 14.5 12.8 13.6 13C13.8 13.8 13.2 14.6 12.2 14.6L3.5 14.6C1.5 14.6 0.5 12.5 0.5 10.5C0.5 9 1.2 8.2 2.5 7.5Z" fill="url(#gt)" stroke="#b4844e" stroke-width="0.8"/><path d="M10.6 8.8H14.4M10.6 11H14.1M10.6 13H13.4" stroke="#b47d48" stroke-width="0.8"/></svg></div>
<div class="c" style="left:1144.5px;top:9.5px;line-height:15px">Completed</div>
<div class="c" style="left:1253px;top:9.5px;line-height:15px">07 Apr 2021 15:23</div>
</div>
<div class="row" style="top:398px;height:27px">
<div class="vs" style="left:49px;top:5px;height:17px"></div>
<div class="vs" style="left:73px;top:5px;height:17px"></div>
<div class="vs" style="left:187px;top:5px;height:17px"></div>
<div class="vs" style="left:288px;top:5px;height:17px"></div>
<div class="vs" style="left:541px;top:5px;height:17px"></div>
<div class="vs" style="left:797px;top:5px;height:17px"></div>
<div class="vs" style="left:899px;top:5px;height:17px"></div>
<div class="vs" style="left:1110px;top:5px;height:17px"></div>
<div class="vs" style="left:1248px;top:5px;height:17px"></div>
<div class="abs" style="left:3px;top:5px"><svg width="20" height="19" viewBox="0 0 20 19"><defs><linearGradient id="gkey" x1="0" y1="0" x2="1" y2="1"><stop offset="0" stop-color="#fbeea0"/><stop offset="1" stop-color="#e9c54a"/></linearGradient><linearGradient id="gbad" x1="0" y1="0" x2="0" y2="1"><stop offset="0" stop-color="#f39a5a"/><stop offset="1" stop-color="#c9501c"/></linearGradient></defs><path d="M8.4 9.3L10.7 11.8L3.6 17.4L1.3 15L2.2 13.9L3.4 14.6L4.2 13.7L3.3 12.7Z" fill="url(#gkey)" stroke="#c9a24a" stroke-width="0.9" stroke-linejoin="round"/><rect x="-4.2" y="-3.4" width="8.4" height="6.8" rx="2.2" transform="translate(11.7 7.2) rotate(40)" fill="url(#gkey)" stroke="#c9a24a" stroke-width="1"/><circle cx="13.6" cy="14.4" r="3.4" fill="url(#gbad)" stroke="#b8501e" stroke-width="0.6"/><rect x="11.8" y="13.6" width="3.6" height="1.5" fill="#fff"/></svg></div>
<div class="abs" style="left:27.5px;top:8.5px"><svg width="20" height="11" viewBox="0 0 20 11"><defs><linearGradient id="bg" x1="0" y1="0" x2="0" y2="1"><stop offset="0" stop-color="#8ee07a"/><stop offset="0.5" stop-color="#3fbf2f"/><stop offset="1" stop-color="#2e9a24"/></linearGradient></defs><rect x="0.5" y="0.5" width="17.5" height="9" rx="2" fill="url(#bg)" stroke="#6aa865" stroke-width="0.8"/><rect x="18" y="2.8" width="2" height="4" fill="#9aa09a"/></svg></div>
<div class="abs" style="left:53.5px;top:7.5px"><svg width="17" height="16" viewBox="0 0 17 16"><defs><linearGradient id="gw" x1="0" y1="0" x2="0" y2="1"><stop offset="0" stop-color="#fffbd0"/><stop offset="1" stop-color="#f6dc6a"/></linearGradient></defs><path d="M8.5 1.2L15.9 14H1.1Z" fill="url(#gw)" stroke="#cf9f3e" stroke-width="1.1" stroke-linejoin="round"/><path d="M8.5 2.9L14.2 13H2.8Z" fill="none" stroke="#fffbe6" stroke-width="0.6"/><path d="M8.5 6v3.8" stroke="#d2ac38" stroke-width="1.7"/><rect x="7.7" y="10.6" width="1.6" height="1.5" fill="#d2ac38"/></svg></div>
<div class="c lk" style="left:82.5px;top:6px;line-height:15px">Device-9</div>
<div class="c lk" style="left:196.5px;top:6px;line-height:15px">Dublin</div>
<div class="c" style="left:293px;top:6px;line-height:15px">ZBR_TC8000_AD4_Testing - 1.00</div>
<div class="c" style="left:545.5px;top:6px;line-height:15px">-</div>
<div class="c" style="left:802px;top:6px;line-height:15px">-</div>
<div class="c" style="left:903.5px;top:6px;line-height:15px">-</div>
<div class="abs" style="left:1114.5px;top:6.5px"><svg width="16" height="16" viewBox="0 0 16 16"><defs><linearGradient id="gt" x1="0" y1="0" x2="0.4" y2="1"><stop offset="0" stop-color="#fbe6c6"/><stop offset="1" stop-color="#e8b47a"/></linearGradient></defs><path d="M2.5 7.5C4 6.5 5.5 6 6.5 4.5L9 1.5C10 0.5 12 0.8 12 2.5L11.5 6.2L14 6.5C15.3 6.8 15.3 8.2 14.6 8.8C15.2 9.3 15.1 10.6 14.3 11C14.8 11.6 14.5 12.8 13.6 13C13.8 13.8 13.2 14.6 12.2 14.6L3.5 14.6C1.5 14.6 0.5 12.5 0.5 10.5C0.5 9 1.2 8.2 2.5 7.5Z" fill="url(#gt)" stroke="#b4844e" stroke-width="0.8"/><path d="M10.6 8.8H14.4M10.6 11H14.1M10.6 13H13.4" stroke="#b47d48" stroke-width="0.8"/></svg></div>
<div class="c" style="left:1144.5px;top:6px;line-height:15px">Completed</div>
<div class="c" style="left:1253px;top:6px;line-height:15px">-</div>
</div>
<div class="row g" style="top:425px;height:26px">
<div class="vs" style="left:49px;top:5px;height:16px"></div>
<div class="vs" style="left:73px;top:5px;height:16px"></div>
<div class="vs" style="left:187px;top:5px;height:16px"></div>
<div class="vs" style="left:288px;top:5px;height:16px"></div>
<div class="vs" style="left:541px;top:5px;height:16px"></div>
<div class="vs" style="left:797px;top:5px;height:16px"></div>
<div class="vs" style="left:899px;top:5px;height:16px"></div>
<div class="vs" style="left:1110px;top:5px;height:16px"></div>
<div class="vs" style="left:1248px;top:5px;height:16px"></div>
<div class="abs" style="left:5px;top:7px"><svg width="14" height="14" viewBox="0 0 14 14"><circle cx="7" cy="7" r="6" fill="#d6463c"/><path d="M8.2 3.8l-2.4 6.4" stroke="#f7a34a" stroke-width="1.3"/></svg></div>
<div class="abs" style="left:27.5px;top:8.5px"><svg width="20" height="11" viewBox="0 0 20 11"><defs><linearGradient id="bgr" x1="0" y1="0" x2="0" y2="1"><stop offset="0" stop-color="#c9c9c9"/><stop offset="0.5" stop-color="#a8a8a8"/><stop offset="1" stop-color="#8f8f8f"/></linearGradient></defs><rect x="0.5" y="0.5" width="17.5" height="9" rx="2" fill="url(#bgr)" stroke="#8e8e8e" stroke-width="0.8"/><rect x="18" y="2.8" width="2" height="4" fill="#999"/></svg></div>
<div class="abs" style="left:53.5px;top:7.5px"><svg width="17" height="16" viewBox="0 0 17 16"><defs><linearGradient id="gw" x1="0" y1="0" x2="0" y2="1"><stop offset="0" stop-color="#fffbd0"/><stop offset="1" stop-color="#f6dc6a"/></linearGradient></defs><path d="M8.5 1.2L15.9 14H1.1Z" fill="url(#gw)" stroke="#cf9f3e" stroke-width="1.1" stroke-linejoin="round"/><path d="M8.5 2.9L14.2 13H2.8Z" fill="none" stroke="#fffbe6" stroke-width="0.6"/><path d="M8.5 6v3.8" stroke="#d2ac38" stroke-width="1.7"/><rect x="7.7" y="10.6" width="1.6" height="1.5" fill="#d2ac38"/></svg></div>
<div class="c lk" style="left:82.5px;top:6px;line-height:15px">Device10</div>
<div class="c lk" style="left:196.5px;top:6px;line-height:15px">Dublin</div>
<div class="c" style="left:293px;top:6px;line-height:15px">-</div>
<div class="c" style="left:545.5px;top:6px;line-height:15px">-</div>
<div class="c" style="left:802px;top:6px;line-height:15px">-</div>
<div class="c" style="left:903.5px;top:6px;line-height:15px">-</div>
<div class="c" style="left:1115px;top:6px;line-height:15px">-</div>
<div class="c" style="left:1253px;top:6px;line-height:15px">-</div>
</div>
<div class="row" style="top:451px;height:27px">
<div class="vs" style="left:49px;top:5px;height:17px"></div>
<div class="vs" style="left:73px;top:5px;height:17px"></div>
<div class="vs" style="left:187px;top:5px;height:17px"></div>
<div class="vs" style="left:288px;top:5px;height:17px"></div>
<div class="vs" style="left:541px;top:5px;height:17px"></div>
<div class="vs" style="left:797px;top:5px;height:17px"></div>
<div class="vs" style="left:899px;top:5px;height:17px"></div>
<div class="vs" style="left:1110px;top:5px;height:17px"></div>
<div class="vs" style="left:1248px;top:5px;height:17px"></div>
<div class="abs" style="left:4px;top:7px"><svg width="16" height="16" viewBox="0 0 16 16"><defs><linearGradient id="gc" x1="0" y1="0" x2="0" y2="1"><stop offset="0" stop-color="#a3d99a"/><stop offset="1" stop-color="#4fa54a"/></linearGradient></defs><circle cx="8" cy="8" r="6.5" fill="url(#gc)" stroke="#4d9a49" stroke-width="1"/><circle cx="8" cy="8" r="5.6" fill="none" stroke="#d8f0d4" stroke-width="0.6" opacity="0.8"/><path d="M4.9 8.1l2.1 2l4.1-4.1" fill="none" stroke="#fff" stroke-width="1.9"/></svg></div>
<div class="abs" style="left:27.5px;top:8.5px"><svg width="20" height="11" viewBox="0 0 20 11"><defs><linearGradient id="bg" x1="0" y1="0" x2="0" y2="1"><stop offset="0" stop-color="#8ee07a"/><stop offset="0.5" stop-color="#3fbf2f"/><stop offset="1" stop-color="#2e9a24"/></linearGradient></defs><rect x="0.5" y="0.5" width="17.5" height="9" rx="2" fill="url(#bg)" stroke="#6aa865" stroke-width="0.8"/><rect x="18" y="2.8" width="2" height="4" fill="#9aa09a"/></svg></div>
<div class="abs" style="left:53.5px;top:7.5px"><svg width="17" height="16" viewBox="0 0 17 16"><defs><linearGradient id="gw" x1="0" y1="0" x2="0" y2="1"><stop offset="0" stop-color="#fffbd0"/><stop offset="1" stop-color="#f6dc6a"/></linearGradient></defs><path d="M8.5 1.2L15.9 14H1.1Z" fill="url(#gw)" stroke="#cf9f3e" stroke-width="1.1" stroke-linejoin="round"/><path d="M8.5 2.9L14.2 13H2.8Z" fill="none" stroke="#fffbe6" stroke-width="0.6"/><path d="M8.5 6v3.8" stroke="#d2ac38" stroke-width="1.7"/><rect x="7.7" y="10.6" width="1.6" height="1.5" fill="#d2ac38"/></svg></div>
<div class="c lk" style="left:82.5px;top:6px;line-height:15px">EDA50_Dev1</div>
<div class="c lk" style="left:196.5px;top:6px;line-height:15px">Lisbon</div>
<div class="c" style="left:293px;top:6px;line-height:15px">-</div>
<div class="c" style="left:545.5px;top:6px;line-height:15px">eda50_a4_firmware_update - 1.00</div>
<div class="c" style="left:802px;top:6px;line-height:15px">ASAP</div>
<div class="c" style="left:903.5px;top:6px;line-height:15px">-</div>
<div class="abs" style="left:1115px;top:7px"><svg width="16" height="16" viewBox="0 0 16 16"><circle cx="8" cy="8" r="6.5" fill="#f3efe6" stroke="#b89c6c" stroke-width="1.1"/><circle cx="8" cy="8" r="5.1" fill="#e4f2f8" stroke="#6f8a95" stroke-width="0.9"/><path d="M8 8.8L6.6 6M8 8.8L10.6 6.6" fill="none" stroke="#3e4a50" stroke-width="1.2"/></svg></div>
<div class="c" style="left:1144.5px;top:6px;line-height:15px">Pending</div>
<div class="c" style="left:1253px;top:6px;line-height:15px">12 Jun 2019 14:06</div>
</div></div><!--/rows-->
<div id="botline"></div>
<div class="abs" style="left:7px;top:491px;font-size:9.6px;line-height:11px;color:#a0a9ae;letter-spacing:0.75px">39 devices</div>
<!--footer-->
<div class="pgb dis" style="left:569px"><svg width="30" height="24" viewBox="0 0 30 24"><circle cx="15.5" cy="11.2" r="6.8" fill="#bcdcef" stroke="#a9cce3" stroke-width="0.8"/><path d="M12 7.2v8M19.5 11.2h-6M16 8l-3.2 3.2l3.2 3.2" fill="none" stroke="#fff" stroke-width="1.8"/></svg></div>
<div class="pgb dis" style="left:604px"><svg width="30" height="24" viewBox="0 0 30 24"><circle cx="15.5" cy="11.2" r="6.8" fill="#bcdcef" stroke="#a9cce3" stroke-width="0.8"/><path d="M19.5 11.2h-7M15.5 8l-3.2 3.2l3.2 3.2" fill="none" stroke="#fff" stroke-width="1.8"/></svg></div>
<div class="abs" style="left:681px;top:492px;font-size:10px;line-height:11px;font-weight:bold;color:#666;letter-spacing:1.1px">1 ... 10</div>
<div class="pgb" style="left:763px"><svg width="27" height="25" viewBox="0 0 27 25"><defs><linearGradient id="gpn" x1="0" y1="0" x2="0" y2="1"><stop offset="0" stop-color="#5aaee3"/><stop offset="1" stop-color="#2a82c2"/></linearGradient></defs><ellipse cx="13.5" cy="18.6" rx="5" ry="1" fill="#000" opacity="0.08"/><circle cx="13.5" cy="11.3" r="6.7" fill="url(#gpn)" stroke="#2a7fb8" stroke-width="0.6"/><path d="M9.5 11.3h7M13.5 8.1l3.2 3.2l-3.2 3.2" fill="none" stroke="#fff" stroke-width="1.8"/></svg></div>
<div class="pgb" style="left:793px"><svg width="27" height="25" viewBox="0 0 27 25"><ellipse cx="13.5" cy="18.6" rx="5" ry="1" fill="#000" opacity="0.08"/><circle cx="13.5" cy="11.3" r="6.7" fill="url(#gpn)" stroke="#2a7fb8" stroke-width="0.6"/><path d="M9 11.3h6.5M12.5 8.1l3.2 3.2l-3.2 3.2M17.3 7.3v8" fill="none" stroke="#fff" stroke-width="1.8"/></svg></div>
</body></html>
